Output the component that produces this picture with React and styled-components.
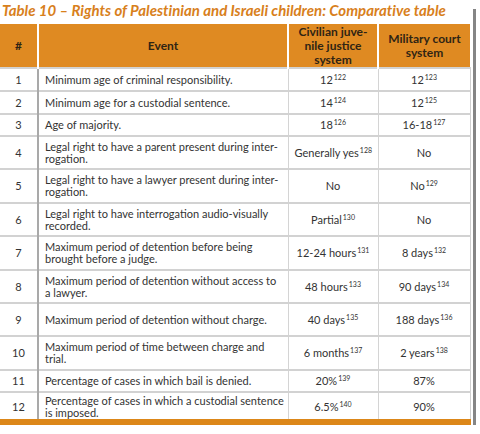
import React from "react";
import styled, { createGlobalStyle } from "styled-components";

const Global = createGlobalStyle`
  html, body { margin: 0; padding: 0; background: #fff; }
  body { font-family: Lato, "Open Sans", sans-serif; }
`;

const Frame = styled.div`
  width: 470px;
  margin-top: 3px;
  background: #fff;
  box-shadow: 3px 3px 0 0 #fff, 6px 6px 0 0 #858585;
`;

const Title = styled.h1`
  margin: 0;
  padding: 0 0 0 2px;
  height: 21px;
  font-size: 15px;
  line-height: 15px;
  font-weight: 700;
  font-style: italic;
  color: #d8801c;
  white-space: nowrap;
  font-variant-ligatures: none;
`;

const Table = styled.table`
  width: 470px;
  border-collapse: collapse;
  table-layout: fixed;
  border-bottom: 6px solid #dc8719;
`;

const Col = styled.col`
  width: ${(p) => p.$w}px;
`;

const Head = styled.th`
  background: #df8a22;
  color: #2f2414;
  font-size: 12px;
  line-height: 14px;
  font-weight: 700;
  height: 43px;
  padding: 0 2px;
  text-align: center;
  vertical-align: middle;
  white-space: nowrap;
  border-right: 2px solid #fff;
  &:last-child { border-right: none; }
`;

const Cell = styled.td`
  font-size: 11px;
  line-height: 12px;
  color: #333;
  padding: ${(p) => (p.$last ? "2px 6px 0" : "2px 6px")};
  height: ${(p) => p.$h}px;
  box-sizing: border-box;
  white-space: nowrap;
  text-align: ${(p) => (p.$left ? "left" : "center")};
  vertical-align: middle;
  border-top: 2px solid #d2d2d2;
  border-right: 1px solid #d4d4d4;
  &:first-child { border-right: 2px solid #a9a9a9; }
  &:last-child { border-right: 1px solid #cfcfcf; }
`;

const Sup = styled.sup`
  font-size: 7px;
  line-height: 0;
  vertical-align: 4px;
  margin-left: 1px;
`;

const rows = [
  { n: 1, h: 23, ev: ["Minimum age of criminal responsibility."], c: ["12", "122"], m: ["12", "123"] },
  { n: 2, h: 23, ev: ["Minimum age for a custodial sentence."], c: ["14", "124"], m: ["12", "125"] },
  { n: 3, h: 22, ev: ["Age of majority."], c: ["18", "126"], m: ["16-18", "127"] },
  { n: 4, h: 33, ev: ["Legal right to have a parent present during inter-", "rogation."], c: ["Generally yes", "128"], m: ["No"] },
  { n: 5, h: 34, ev: ["Legal right to have a lawyer present during inter-", "rogation."], c: ["No"], m: ["No", "129"] },
  { n: 6, h: 33, ev: ["Legal right to have interrogation audio-visually", "recorded."], c: ["Partial", "130"], m: ["No"] },
  { n: 7, h: 34, ev: ["Maximum period of detention before being", "brought before a judge."], c: ["12-24 hours", "131"], m: ["8 days", "132"] },
  { n: 8, h: 33, ev: ["Maximum period of detention without access to", "a lawyer."], c: ["48 hours", "133"], m: ["90 days", "134"] },
  { n: 9, h: 33, ev: ["Maximum period of detention without charge."], c: ["40 days", "135"], m: ["188 days", "136"] },
  { n: 10, h: 34, ev: ["Maximum period of time between charge and", "trial."], c: ["6 months", "137"], m: ["2 years", "138"] },
  { n: 11, h: 22, ev: ["Percentage of cases in which bail is denied."], c: ["20%", "139"], m: ["87%"] },
  { n: 12, h: 30, ev: ["Percentage of cases in which a custodial sentence", "is imposed."], c: ["6.5%", "140"], m: ["90%"], last: true },
];

const Val = ({ v }) => (
  <>
    {v[0]}
    {v[1] && <Sup>{v[1]}</Sup>}
  </>
);

export default function App() {
  return (
    <>
      <Global />
      <Frame>
        <Title>Table 10 – Rights of Palestinian and Israeli children: Comparative table</Title>
        <Table>
          <colgroup>
            <Col $w={38} />
            <Col $w={250} />
            <Col $w={90} />
            <Col $w={92} />
          </colgroup>
          <thead>
            <tr>
              <Head>#</Head>
              <Head>Event</Head>
              <Head>
                Civilian juve-
                <br />
                nile justice
                <br />
                system
              </Head>
              <Head>
                Military court
                <br />
                system
              </Head>
            </tr>
          </thead>
          <tbody>
            {rows.map((r) => (
              <tr key={r.n}>
                <Cell $h={r.h} $last={r.last}>{r.n}</Cell>
                <Cell $h={r.h} $last={r.last} $left>
                  {r.ev.map((l, i) => (
                    <React.Fragment key={i}>
                      {i > 0 && <br />}
                      {l}
                    </React.Fragment>
                  ))}
                </Cell>
                <Cell $h={r.h} $last={r.last}>
                  <Val v={r.c} />
                </Cell>
                <Cell $h={r.h} $last={r.last}>
                  <Val v={r.m} />
                </Cell>
              </tr>
            ))}
          </tbody>
        </Table>
      </Frame>
    </>
  );
}
